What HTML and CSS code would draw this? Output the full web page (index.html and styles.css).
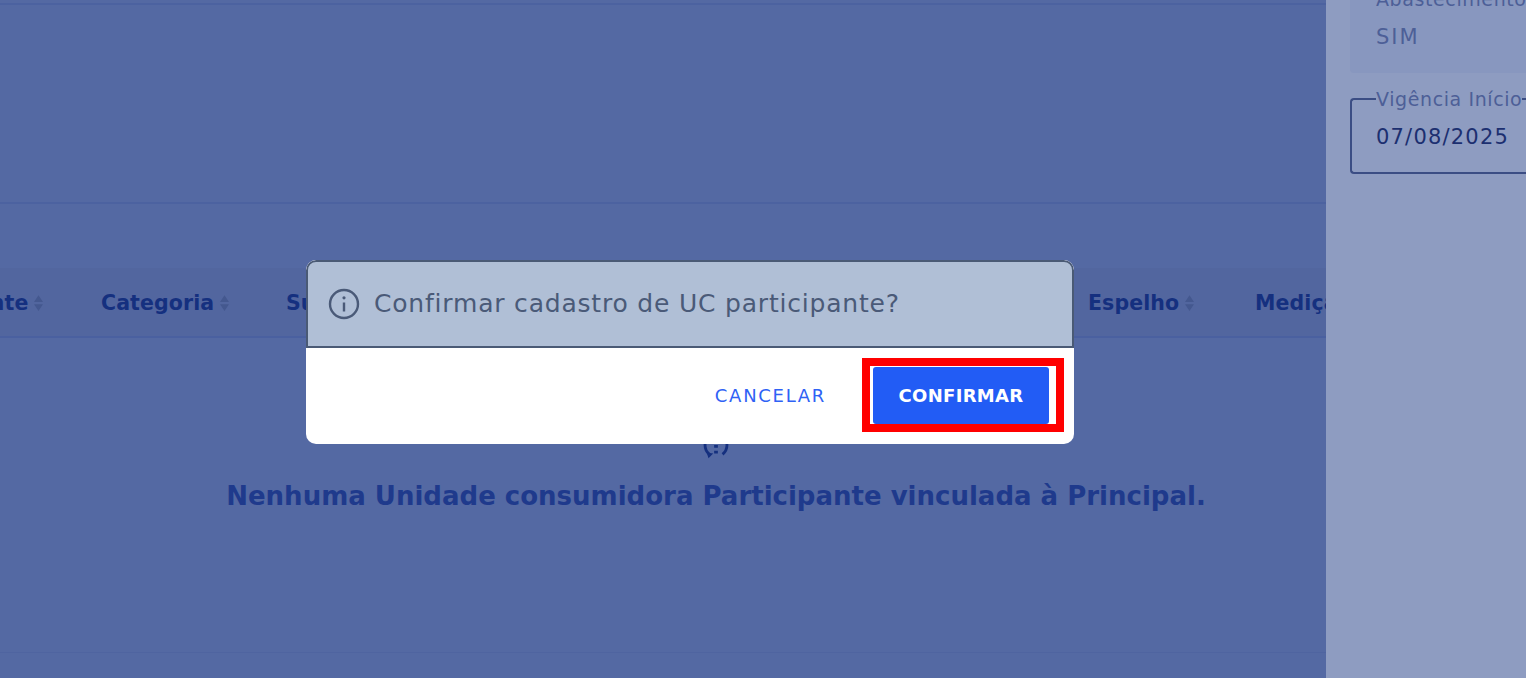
FILE: index.html
```html
<!DOCTYPE html>
<html lang="pt-BR">
<head>
  <meta charset="UTF-8" />
  <title>Cadastro de UC participante</title>
  <link rel="stylesheet" href="styles.css">
</head>
<body>
  <div class="page">
    <main class="main">
      <div class="top-section"></div>
      <div class="filter-section"></div>
      <div class="table-head">
        <div class="head-cell"><span>Participante</span><svg class="sort" viewBox="1 1 8 14"><path d="M5 1 9 7H1zM5 15 1 9h8z"/></svg></div>
        <div class="head-cell"><span>Categoria</span><svg class="sort" viewBox="1 1 8 14"><path d="M5 1 9 7H1zM5 15 1 9h8z"/></svg></div>
        <div class="head-cell"><span>Subgrupo</span><svg class="sort" viewBox="1 1 8 14"><path d="M5 1 9 7H1zM5 15 1 9h8z"/></svg></div>
        <div class="head-cell"><span>Espelho</span><svg class="sort" viewBox="1 1 8 14"><path d="M5 1 9 7H1zM5 15 1 9h8z"/></svg></div>
        <div class="head-cell"><span>Medição</span><svg class="sort" viewBox="1 1 8 14"><path d="M5 1 9 7H1zM5 15 1 9h8z"/></svg></div>
      </div>
      <div class="empty-state">
        <svg class="empty-icon" viewBox="0 0 32 32"><path d="M9 6a13 13 0 0 0 0 20M23 6a13 13 0 0 1 0 20"/><path class="empty-dots" d="M14 22h4v3h-4zM14 16h4v3h-4zM6 24l7 1-5 5z"/></svg>
        <p class="empty-text">Nenhuma Unidade consumidora Participante vinculada à Principal.</p>
      </div>
      <div class="table-foot"></div>
    </main>

    <aside class="side">
      <div class="side-card">
        <div class="side-label">Abastecimento</div>
        <div class="side-value">SIM</div>
      </div>
      <fieldset class="side-field">
        <legend>Vigência Início</legend>
        <div class="side-date">07/08/2025</div>
      </fieldset>
    </aside>
  </div>

  <!-- modal de confirmacao -->
  <div class="modal">
    <div class="modal-header">
      <svg class="info-icon" viewBox="0 0 32 32"><circle cx="16" cy="16" r="14"/><path d="M16 14.5v9"/><circle class="info-dot" cx="16" cy="9.8" r="1.6"/></svg>
      <span>Confirmar cadastro de UC participante?</span>
    </div>
    <div class="modal-footer">
      <button class="btn-cancel">CANCELAR</button>
      <button class="btn-confirm">CONFIRMAR</button>
    </div>
  </div>
  <div class="highlight"></div>
</body>
</html>
```

FILE: styles.css
```css
* {
  box-sizing: border-box;
}

html, body {
  margin: 0;
  height: 100%;
  overflow: hidden;
}

body {
  font-family: "DejaVu Sans", sans-serif;
  background-color: #5469a3;
}

.page {
  display: flex;
  height: 678px;
}

.main {
  flex: 0 0 1326px;
  min-width: 0;
  overflow: hidden;
  background-color: #5469a3;
}

.top-section {
  height: 204px;
  border-top: 3px solid #5469a3;
  border-bottom: 2px solid #4c62a0;
  position: relative;
  box-shadow: inset 0 2px 0 #4c62a0;
}

.filter-section {
  height: 64px;
}

.table-head {
  display: grid;
  grid-template-columns: 215px 185px 802px 167px 200px;
  margin-left: -114px;
  height: 70px;
  padding-top: 1px;
  align-items: center;
  background-color: #52669f;
  border-bottom: 2px solid #4a60a0;
  font-size: 20.5px;
  font-weight: 700;
  letter-spacing: 0.1px;
  color: #15307f;
}

.head-cell {
  display: flex;
  align-items: center;
  gap: 6px;
  white-space: nowrap;
}

.sort {
  width: 9px;
  height: 16px;
  fill: #44588f;
}

.empty-state {
  height: 314px;
  padding-left: 106px;
  display: flex;
  flex-direction: column;
  align-items: center;
}

.empty-icon {
  width: 30px;
  height: 30px;
  margin-top: 92px;
  fill: none;
  stroke: #15307f;
  stroke-width: 3;
}

.empty-dots {
  fill: #15307f;
  stroke: none;
}

.empty-text {
  margin: 21px 0 0;
  font-size: 26px;
  font-weight: 700;
  color: #1f3a8c;
  white-space: nowrap;
}

.table-foot {
  border-top: 1px solid #4f64a0;
}

.side {
  flex: 1;
  padding: 0 0 0 24px;
  overflow: hidden;
  background-color: #8e9cc1;
}

.side-card {
  width: 220px;
  height: 73px;
  margin-top: 0;
  padding: 0 0 0 26px;
  background-color: #8897bf;
  border-radius: 0 0 0 4px;
  overflow: hidden;
  color: #4d5f97;
}

.side-label {
  margin-top: -12px;
  font-size: 19px;
  letter-spacing: 0.6px;
  white-space: nowrap;
}

.side-value {
  margin-top: 15px;
  font-size: 21px;
  letter-spacing: 2px;
}

.side-field {
  width: 220px;
  height: 86px;
  margin: 15px 0 0;
  padding: 0 0 0 24px;
  border: 2px solid #3b4d84;
  border-right: none;
  border-radius: 4px 0 0 4px;
  min-inline-size: 0;
}

.side-field legend {
  padding: 0;
  font-size: 19px;
  letter-spacing: 0.6px;
  color: #4d5f97;
  white-space: nowrap;
}

.side-date {
  margin-top: 15px;
  font-size: 21px;
  letter-spacing: 1.2px;
  color: #1c2f70;
}

.modal {
  position: absolute;
  left: 306px;
  top: 260px;
  width: 768px;
  height: 184px;
  display: flex;
  flex-direction: column;
  background-color: #fff;
  border-radius: 10px;
  overflow: hidden;
}

.modal-header {
  height: 88px;
  display: flex;
  align-items: center;
  gap: 14px;
  padding: 0 0 1px 20px;
  background-color: #b0bfd6;
  border: 2px solid #4a5a75;
  border-radius: 10px 10px 0 0;
  font-size: 25px;
  letter-spacing: 0.8px;
  color: #4a5a78;
  white-space: nowrap;
}

.info-icon {
  width: 32px;
  height: 32px;
  fill: none;
  stroke: #4a5a78;
  stroke-width: 2.4;
}

.info-dot {
  fill: #4a5a78;
  stroke: none;
}

.modal-footer {
  flex: 1;
  display: flex;
  align-items: flex-start;
  justify-content: flex-end;
  padding: 19px 25px 0 0;
  gap: 47px;
}

.modal-footer button {
  font-family: inherit;
  font-size: 18px;
  border: none;
  cursor: pointer;
}

.btn-cancel {
  height: 57px;
  padding: 0;
  background: none;
  color: #2f62f5;
  letter-spacing: 1.7px;
}

.btn-confirm {
  width: 176px;
  height: 57px;
  background-color: #225cf5;
  border: 1px solid #a8c0ff;
  border-radius: 3px;
  color: #fff;
  font-weight: 700;
  letter-spacing: 0.3px;
}

/* marcacao vermelha sobre o botao */
.highlight {
  position: absolute;
  left: 862px;
  top: 358px;
  width: 202px;
  height: 74px;
  border: 8px solid #f00;
}
```
